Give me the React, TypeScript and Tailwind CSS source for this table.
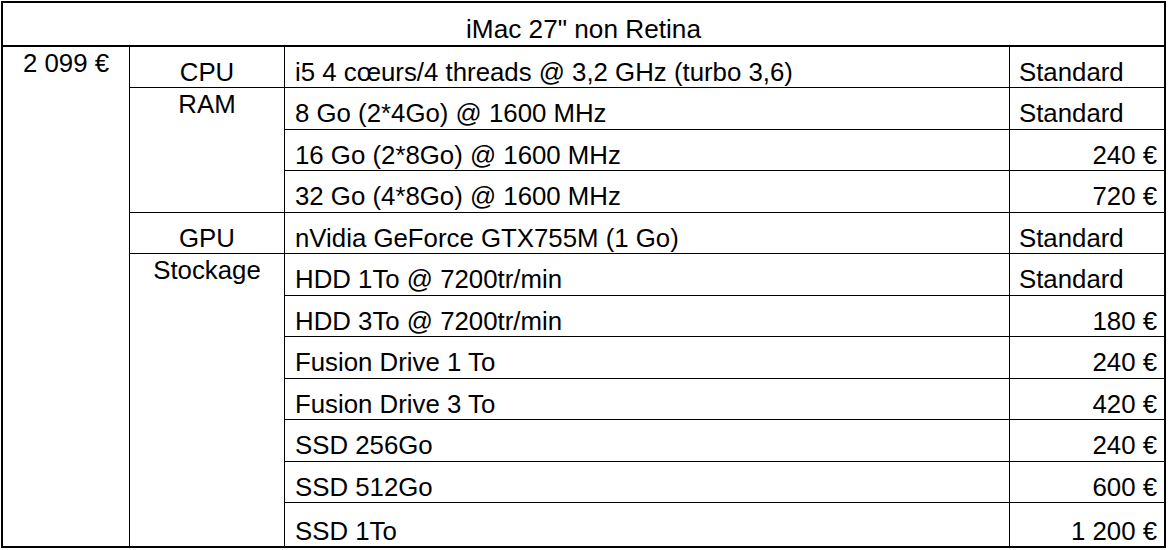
import React from 'react';

interface Option {
  label: string;
  price: string;
}

interface Group {
  name: string;
  options: Option[];
}

const groups: Group[] = [
  { name: 'CPU', options: [{ label: 'i5 4 cœurs/4 threads @ 3,2 GHz (turbo 3,6)', price: 'Standard' }] },
  {
    name: 'RAM',
    options: [
      { label: '8 Go (2*4Go) @ 1600 MHz', price: 'Standard' },
      { label: '16 Go (2*8Go) @ 1600 MHz', price: '240 €' },
      { label: '32 Go (4*8Go) @ 1600 MHz', price: '720 €' },
    ],
  },
  { name: 'GPU', options: [{ label: 'nVidia GeForce GTX755M (1 Go)', price: 'Standard' }] },
  {
    name: 'Stockage',
    options: [
      { label: 'HDD 1To @ 7200tr/min', price: 'Standard' },
      { label: 'HDD 3To @ 7200tr/min', price: '180 €' },
      { label: 'Fusion Drive 1 To', price: '240 €' },
      { label: 'Fusion Drive 3 To', price: '420 €' },
      { label: 'SSD 256Go', price: '240 €' },
      { label: 'SSD 512Go', price: '600 €' },
      { label: 'SSD 1To', price: '1 200 €' },
    ],
  },
];

const totalRows = groups.reduce((n, g) => n + g.options.length, 0);

export default function App() {
  let rowIndex = 0;

  return (
    <div className="bg-white w-[1168px] h-[550px] pt-px pl-px text-black text-[25.8px] leading-[25.5px] font-['Liberation_Sans',Arial,sans-serif]">
      <div className="w-[1165px] border-2 border-black">
        {/* Header */}
        <div className="h-[44px] border-b-2 border-black flex items-end justify-center pb-[3px] text-[26.2px]">
          iMac 27" non Retina
        </div>

        {/* Body */}
        <div className="grid grid-cols-[127px_155px_725px_154px] grid-rows-[41px_repeat(10,41.5px)_43px]">
          <div
            className="col-start-1 row-start-1 border-r border-black text-center pt-[4px]"
            style={{ gridRowEnd: totalRows + 1 }}
          >
            2 099 €
          </div>

          {groups.map((g, gi) => {
            const start = rowIndex + 1;
            const span = g.options.length;
            const lastGroup = gi === groups.length - 1;
            const cells = g.options.map((o) => {
              rowIndex += 1;
              const last = rowIndex === totalRows;
              return (
                <React.Fragment key={o.label}>
                  <div
                    className={`col-start-3 border-r border-black flex items-end pl-[10px] pb-[2px] ${last ? '' : 'border-b'}`}
                    style={{ gridRowStart: rowIndex }}
                  >
                    {o.label}
                  </div>
                  <div
                    className={`col-start-4 border-black flex items-end pb-[2px] ${
                      o.price === 'Standard' ? 'pl-[9px]' : 'justify-end pr-[7px]'
                    } ${last ? '' : 'border-b'}`}
                    style={{ gridRowStart: rowIndex }}
                  >
                    {o.price}
                  </div>
                </React.Fragment>
              );
            });
            return (
              <React.Fragment key={g.name}>
                <div
                  className={`col-start-2 border-r border-black text-center ${lastGroup ? '' : 'border-b'} ${
                    span > 1 ? 'pt-[4px]' : 'flex items-end justify-center pb-[2px]'
                  }`}
                  style={{ gridRowStart: start, gridRowEnd: start + span }}
                >
                  {g.name}
                </div>
                {cells}
              </React.Fragment>
            );
          })}
        </div>
      </div>
    </div>
  );
}
